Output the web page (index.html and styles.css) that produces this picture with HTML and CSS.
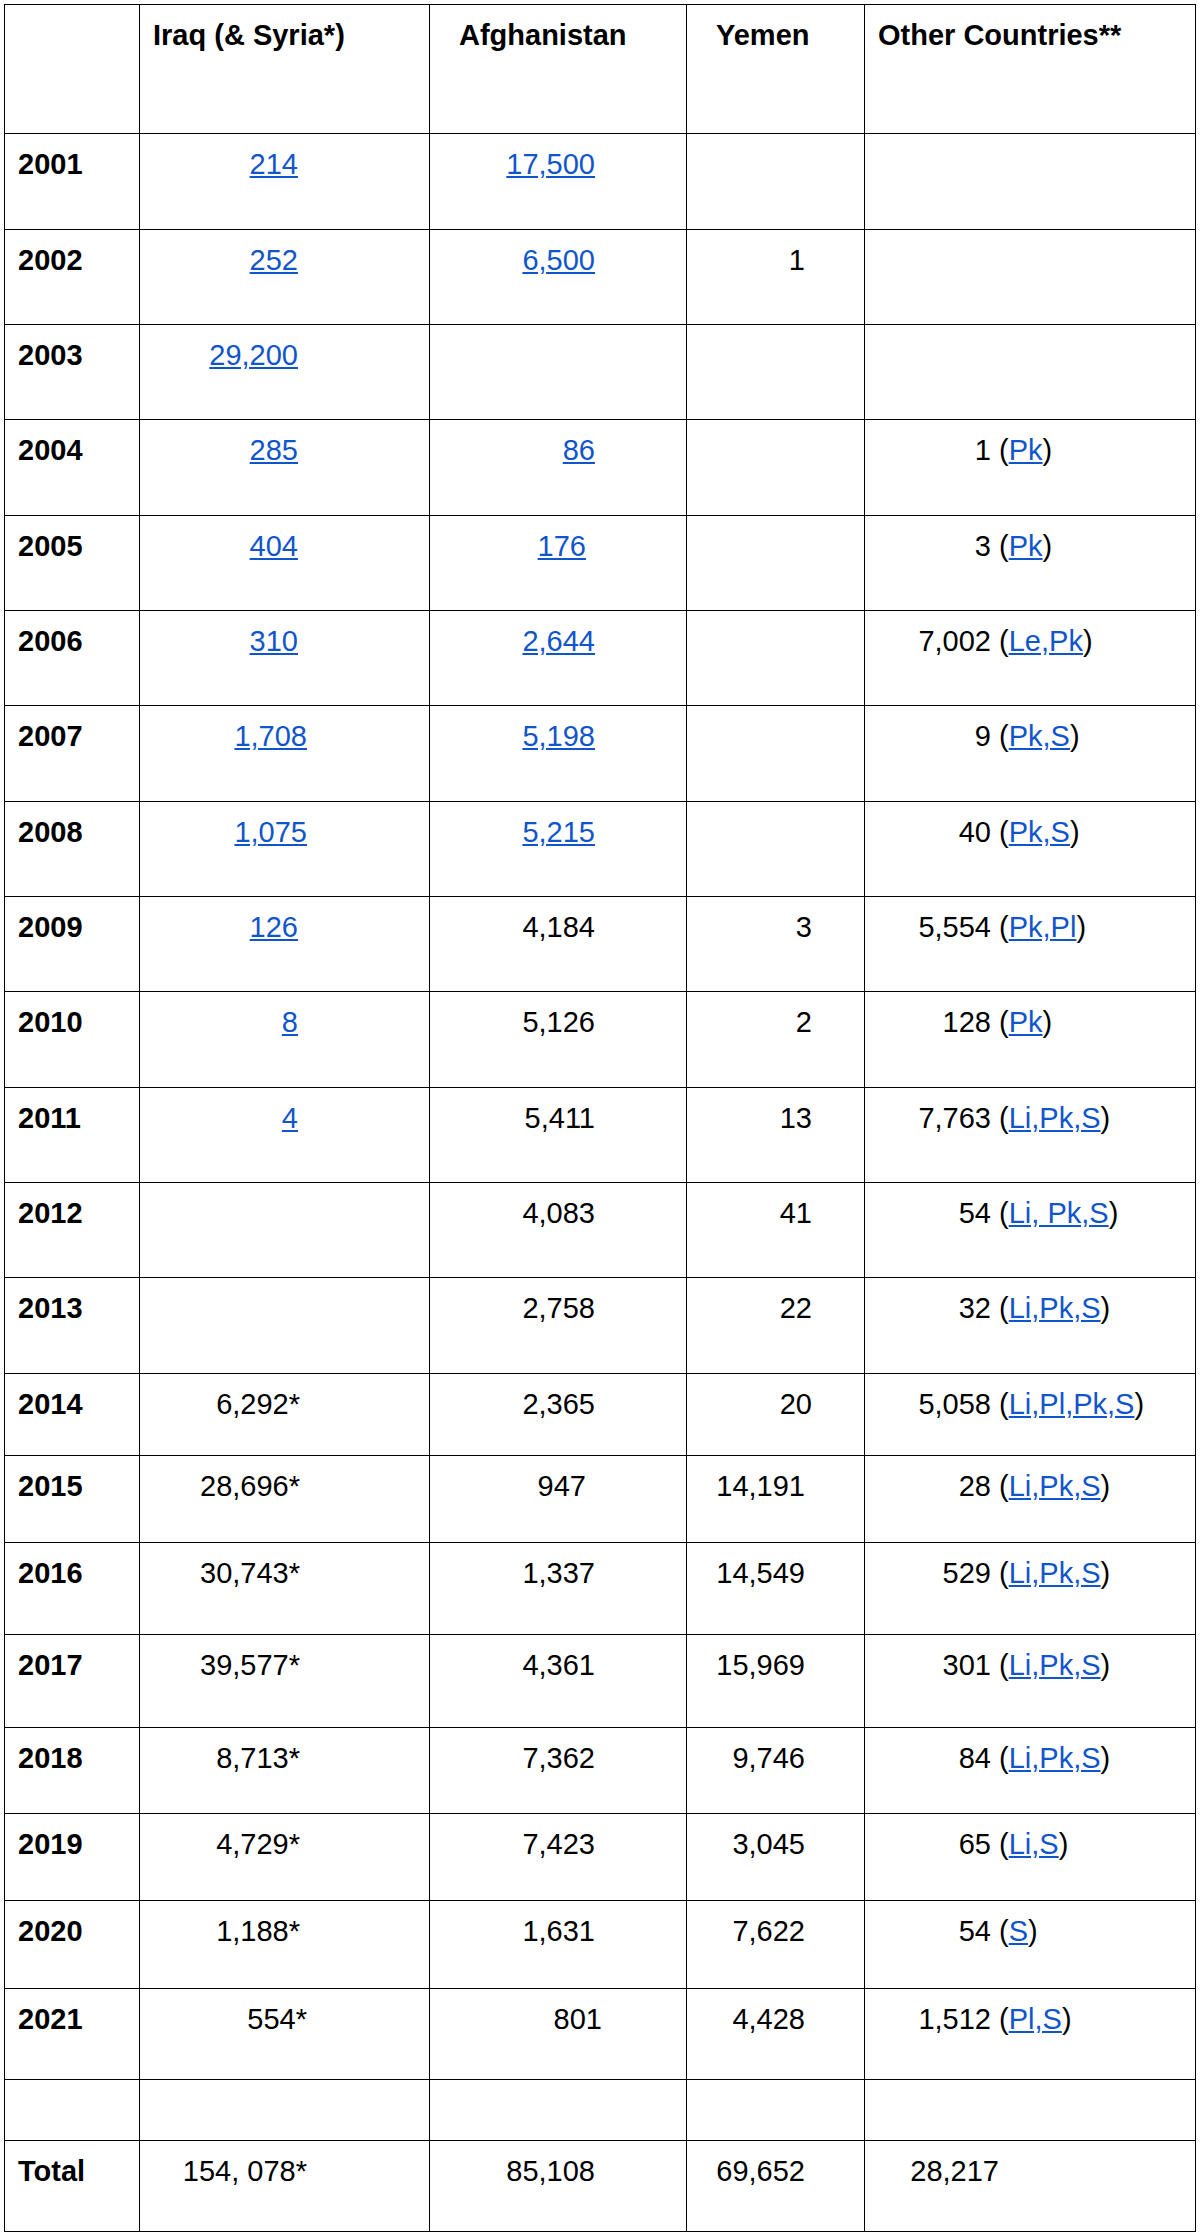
FILE: index.html
```html
<!DOCTYPE html>
<html lang="en">
<head>
<meta charset="utf-8">
<title>Strikes by year</title>
<link rel="stylesheet" href="styles.css">
</head>
<body>
<table class="strikes">
  <colgroup>
    <col class="c-year">
    <col class="c-iraq">
    <col class="c-afg">
    <col class="c-yem">
    <col class="c-oth">
  </colgroup>
  <thead>
    <tr class="r129">
      <th></th>
      <th>Iraq (&amp; Syria*)</th>
      <th class="ind">Afghanistan</th>
      <th class="ind">Yemen</th>
      <th>Other Countries**</th>
    </tr>
  </thead>
  <tbody>
    <tr class="r96">
      <td class="yr">2001</td>
      <td class="iq"><a href="#">214</a></td>
      <td class="af"><a href="#">17,500</a></td>
      <td class="ye"></td>
      <td class="ot"></td>
    </tr>
    <tr class="r95">
      <td class="yr">2002</td>
      <td class="iq"><a href="#">252</a></td>
      <td class="af"><a href="#">6,500</a></td>
      <td class="ye">1</td>
      <td class="ot"></td>
    </tr>
    <tr class="r95">
      <td class="yr">2003</td>
      <td class="iq"><a href="#">29,200</a></td>
      <td class="af"></td>
      <td class="ye"></td>
      <td class="ot"></td>
    </tr>
    <tr class="r96">
      <td class="yr">2004</td>
      <td class="iq"><a href="#">285</a></td>
      <td class="af"><a href="#">86</a></td>
      <td class="ye"></td>
      <td class="ot"><span class="n">1</span> (<a href="#">Pk</a>)</td>
    </tr>
    <tr class="r95">
      <td class="yr">2005</td>
      <td class="iq"><a href="#">404</a></td>
      <td class="af af-n"><a href="#">176</a></td>
      <td class="ye"></td>
      <td class="ot"><span class="n">3</span> (<a href="#">Pk</a>)</td>
    </tr>
    <tr class="r95">
      <td class="yr">2006</td>
      <td class="iq"><a href="#">310</a></td>
      <td class="af"><a href="#">2,644</a></td>
      <td class="ye"></td>
      <td class="ot"><span class="n">7,002</span> (<a href="#">Le,Pk</a>)</td>
    </tr>
    <tr class="r96">
      <td class="yr">2007</td>
      <td class="iq iq-w"><a href="#">1,708</a></td>
      <td class="af"><a href="#">5,198</a></td>
      <td class="ye"></td>
      <td class="ot"><span class="n">9</span> (<a href="#">Pk,S</a>)</td>
    </tr>
    <tr class="r95">
      <td class="yr">2008</td>
      <td class="iq iq-w"><a href="#">1,075</a></td>
      <td class="af"><a href="#">5,215</a></td>
      <td class="ye"></td>
      <td class="ot"><span class="n">40</span> (<a href="#">Pk,S</a>)</td>
    </tr>
    <tr class="r95">
      <td class="yr">2009</td>
      <td class="iq"><a href="#">126</a></td>
      <td class="af">4,184</td>
      <td class="ye ye-s">3</td>
      <td class="ot"><span class="n">5,554</span> (<a href="#">Pk,Pl</a>)</td>
    </tr>
    <tr class="r96">
      <td class="yr">2010</td>
      <td class="iq"><a href="#">8</a></td>
      <td class="af">5,126</td>
      <td class="ye ye-s">2</td>
      <td class="ot"><span class="n">128</span> (<a href="#">Pk</a>)</td>
    </tr>
    <tr class="r95">
      <td class="yr">2011</td>
      <td class="iq"><a href="#">4</a></td>
      <td class="af">5,411</td>
      <td class="ye ye-s">13</td>
      <td class="ot"><span class="n">7,763</span> (<a href="#">Li,Pk,S</a>)</td>
    </tr>
    <tr class="r95">
      <td class="yr">2012</td>
      <td class="iq"></td>
      <td class="af">4,083</td>
      <td class="ye ye-s">41</td>
      <td class="ot"><span class="n">54</span> (<a href="#">Li, Pk,S</a>)</td>
    </tr>
    <tr class="r96">
      <td class="yr">2013</td>
      <td class="iq"></td>
      <td class="af">2,758</td>
      <td class="ye ye-s">22</td>
      <td class="ot"><span class="n">32</span> (<a href="#">Li,Pk,S</a>)</td>
    </tr>
    <tr class="r82">
      <td class="yr">2014</td>
      <td class="iq iq-s">6,292*</td>
      <td class="af">2,365</td>
      <td class="ye ye-s">20</td>
      <td class="ot"><span class="n">5,058</span> (<a href="#">Li,Pl,Pk,S</a>)</td>
    </tr>
    <tr class="r87">
      <td class="yr">2015</td>
      <td class="iq iq-s">28,696*</td>
      <td class="af af-n">947</td>
      <td class="ye">14,191</td>
      <td class="ot"><span class="n">28</span> (<a href="#">Li,Pk,S</a>)</td>
    </tr>
    <tr class="r92">
      <td class="yr">2016</td>
      <td class="iq iq-s">30,743*</td>
      <td class="af">1,337</td>
      <td class="ye">14,549</td>
      <td class="ot"><span class="n">529</span> (<a href="#">Li,Pk,S</a>)</td>
    </tr>
    <tr class="r93">
      <td class="yr">2017</td>
      <td class="iq iq-s">39,577*</td>
      <td class="af">4,361</td>
      <td class="ye">15,969</td>
      <td class="ot"><span class="n">301</span> (<a href="#">Li,Pk,S</a>)</td>
    </tr>
    <tr class="r86">
      <td class="yr">2018</td>
      <td class="iq iq-s">8,713*</td>
      <td class="af">7,362</td>
      <td class="ye">9,746</td>
      <td class="ot"><span class="n">84</span> (<a href="#">Li,Pk,S</a>)</td>
    </tr>
    <tr class="r87">
      <td class="yr">2019</td>
      <td class="iq iq-s">4,729*</td>
      <td class="af">7,423</td>
      <td class="ye">3,045</td>
      <td class="ot"><span class="n">65</span> (<a href="#">Li,S</a>)</td>
    </tr>
    <tr class="r88">
      <td class="yr">2020</td>
      <td class="iq iq-s">1,188*</td>
      <td class="af">1,631</td>
      <td class="ye">7,622</td>
      <td class="ot"><span class="n">54</span> (<a href="#">S</a>)</td>
    </tr>
    <tr class="r91">
      <td class="yr">2021</td>
      <td class="iq iq-w">554*</td>
      <td class="af af-x">801</td>
      <td class="ye">4,428</td>
      <td class="ot"><span class="n">1,512</span> (<a href="#">Pl,S</a>)</td>
    </tr>
    <tr class="r61">
      <td class="yr"></td>
      <td class="iq"></td>
      <td class="af"></td>
      <td class="ye"></td>
      <td class="ot"></td>
    </tr>
    <tr class="r91">
      <td class="yr">Total</td>
      <td class="iq iq-w">154, 078*</td>
      <td class="af">85,108</td>
      <td class="ye">69,652</td>
      <td class="ot"><span class="n n-t">28,217</span></td>
    </tr>
  </tbody>
</table>
</body>
</html>
```

FILE: styles.css
```css
html, body {
  margin: 0;
  padding: 0;
  background: #ffffff;
}

.strikes {
  border-collapse: collapse;
  table-layout: fixed;
  width: 1191px;
  margin: 4px 0 0 4px;
  font-family: "Liberation Sans", Arial, sans-serif;
  font-size: 29px;
  line-height: 32px;
  color: #000000;
}

.c-year { width: 135px; }
.c-iraq { width: 290px; }
.c-afg  { width: 257px; }
.c-yem  { width: 178px; }
.c-oth  { width: 331px; }

.strikes th,
.strikes td {
  border: 1px solid #000000;
  padding: 14px 13px 0 13px;
  vertical-align: top;
  text-align: left;
  white-space: nowrap;
  font-weight: normal;
}

.strikes th {
  font-weight: bold;
}

.strikes th.ind {
  padding-left: 29px;
}

.strikes a {
  color: #1155cc;
  text-decoration: underline;
}

.r129 { height: 129px; }
.r96 { height: 96px; }
.r95 { height: 95px; }
.r93 { height: 93px; }
.r92 { height: 92px; }
.r91 { height: 91px; }
.r88 { height: 88px; }
.r87 { height: 87px; }
.r86 { height: 86px; }
.r82 { height: 82px; }
.r61 { height: 61px; }

.strikes td.yr {
  font-weight: bold;
}

.strikes td.iq {
  text-align: right;
  padding-right: 131px;
}
.strikes td.iq-s { padding-right: 129px; }
.strikes td.iq-w { padding-right: 122px; }

.strikes td.af {
  text-align: right;
  padding-right: 91px;
}
.strikes td.af-n { padding-right: 100px; }
.strikes td.af-x { padding-right: 84px; }

.strikes td.ye {
  text-align: right;
  padding-right: 59px;
}
.strikes td.ye-s { padding-right: 52px; }

.strikes td.ot {
  text-align: left;
}

.n {
  display: inline-block;
  width: 113px;
  text-align: right;
}
.n-t { width: 121px; }
```
